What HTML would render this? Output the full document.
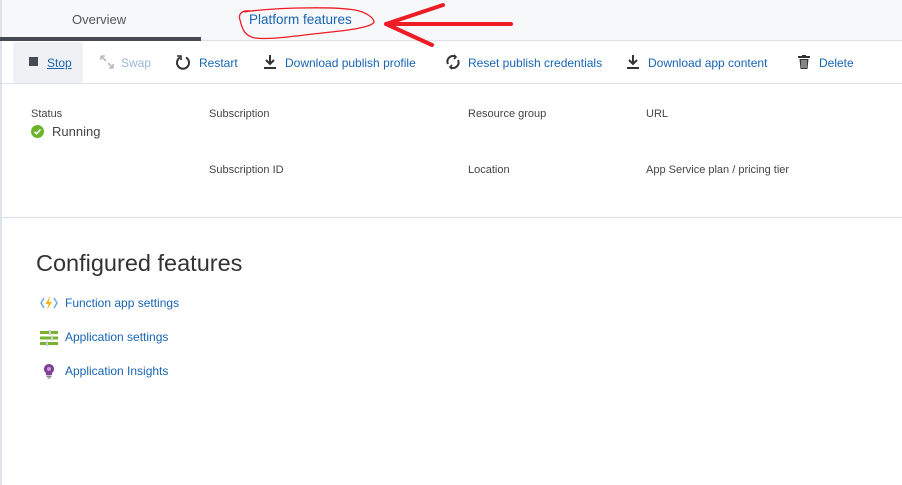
<!DOCTYPE html>
<html><head><meta charset="utf-8"><style>
*{margin:0;padding:0;box-sizing:border-box}
body{width:902px;height:485px;background:#fff;font-family:"Liberation Sans",sans-serif;position:relative;overflow:hidden;color:#333}
.a{position:absolute;white-space:nowrap}
.lnk{color:#1764b3;font-size:12px}
.lbl{font-size:11px;color:#444}
</style></head><body>
<div class="a" style="left:0;top:0;width:902px;height:41px;background:#f7f8fa;border-bottom:1px solid #dde1e6"></div>
<div class="a" style="left:0;top:0;width:2px;height:485px;background:#dde3ea"></div>
<div class="a" style="left:72px;top:12px;font-size:13px;color:#555">Overview</div>
<div class="a" style="left:0;top:37px;width:201px;height:4px;background:#454b54"></div>
<div class="a" style="left:249px;top:12px;font-size:13.5px;color:#1764b3">Platform features</div>

<div class="a" style="left:0;top:83px;width:902px;height:1px;background:#dde1e6"></div>
<div class="a" style="left:13px;top:42px;width:70px;height:41px;background:#f0f1f5"></div>
<div class="a" style="left:29px;top:57px;width:9px;height:9px;background:#454b54"></div>
<div class="a lnk" style="left:47px;top:56px;text-decoration:underline">Stop</div>
<svg class="a" style="left:99px;top:54px" width="16" height="16" viewBox="0 0 16 16" fill="none" stroke="#b8bcc2" stroke-width="1.6"><path d="M2 2l5 5M2 2v4M2 2h4M14 14l-5-5M14 14v-4M14 14h-4"/></svg>
<div class="a" style="left:121px;top:56px;font-size:12px;color:#9bb7d6">Swap</div>
<svg class="a" style="left:175px;top:54px" width="16" height="16" viewBox="0 0 16 16" fill="none" stroke="#333" stroke-width="2"><path d="M5 3.5A6 6 0 1 0 11 3.5"/><path d="M2 2h4v4" stroke-width="1.6"/></svg>
<div class="a lnk" style="left:199px;top:56px">Restart</div>
<svg class="a" style="left:263px;top:54px" width="14" height="16" viewBox="0 0 14 16"><path d="M7 1v9M3 6l4 4 4-4" stroke="#333" stroke-width="2" fill="none"/><rect x="1" y="13" width="12" height="2" fill="#333"/></svg>
<div class="a lnk" style="left:285px;top:56px">Download publish profile</div>
<svg class="a" style="left:445px;top:54px" width="16" height="16" viewBox="0 0 16 16" fill="none" stroke="#333" stroke-width="2"><path d="M3 10A5.5 5.5 0 0 1 10 2.5M13 6A5.5 5.5 0 0 1 6 13.5"/><path d="M9 1l2 2-2 2M7 11l-2 2 2 2" stroke-width="1.6"/></svg>
<div class="a lnk" style="left:468px;top:56px">Reset publish credentials</div>
<svg class="a" style="left:626px;top:54px" width="14" height="16" viewBox="0 0 14 16"><path d="M7 1v9M3 6l4 4 4-4" stroke="#333" stroke-width="2" fill="none"/><rect x="1" y="13" width="12" height="2" fill="#333"/></svg>
<div class="a lnk" style="left:648px;top:56px">Download app content</div>
<svg class="a" style="left:798px;top:55px" width="12" height="14" viewBox="0 0 12 14"><rect x="0" y="1" width="12" height="2" fill="#333"/><rect x="4" y="0" width="4" height="2" fill="#333"/><path d="M1.5 4h9l-1 10h-7z" fill="#333"/><path d="M4 5v8M6 5v8M8 5v8" stroke="#fff" stroke-width=".8"/></svg>
<div class="a lnk" style="left:819px;top:56px">Delete</div>

<div class="a lbl" style="left:31px;top:108px">Status</div>
<div class="a" style="left:31px;top:125px;width:13px;height:13px;border-radius:50%;background:#6db32a"></div>
<svg class="a" style="left:31px;top:125px" width="13" height="13" viewBox="0 0 13 13"><path d="M3.5 6.8l2 2 4-4.3" stroke="#fff" stroke-width="1.6" fill="none"/></svg>
<div class="a" style="left:52px;top:124px;font-size:13px;color:#444">Running</div>
<div class="a lbl" style="left:209px;top:108px">Subscription</div>
<div class="a lbl" style="left:468px;top:108px">Resource group</div>
<div class="a lbl" style="left:646px;top:108px">URL</div>
<div class="a lbl" style="left:209px;top:164px">Subscription ID</div>
<div class="a lbl" style="left:468px;top:164px">Location</div>
<div class="a lbl" style="left:646px;top:164px">App Service plan / pricing tier</div>
<div class="a" style="left:0;top:217px;width:902px;height:1px;background:#dde1e6"></div>

<div class="a" style="left:36px;top:250px;font-size:23.5px;color:#333">Configured features</div>
<svg class="a" style="left:40px;top:295px" width="18" height="16" viewBox="0 0 18 16"><path d="M4 3L1 8l3 5M14 3l3 5-3 5" stroke="#6aa8d8" stroke-width="1.4" fill="none"/><path d="M10 1L5.5 9h3L7 15l5-8H9z" fill="#f6b91d"/></svg>
<div class="a lnk" style="left:65px;top:296px">Function app settings</div>
<svg class="a" style="left:40px;top:330px" width="18" height="16" viewBox="0 0 18 16"><rect x="0" y="1" width="18" height="3" fill="#7ab32e"/><rect x="0" y="6.5" width="18" height="3" fill="#7ab32e"/><rect x="0" y="12" width="18" height="3" fill="#7ab32e"/><rect x="9" y="0" width="2" height="5" fill="#c9d1d6"/><rect x="11" y="5.5" width="2" height="5" fill="#c9d1d6"/><rect x="6" y="11" width="2" height="5" fill="#c9d1d6"/></svg>
<div class="a lnk" style="left:65px;top:330px">Application settings</div>
<svg class="a" style="left:43px;top:363px" width="12" height="16" viewBox="0 0 12 16"><path d="M6 1a5 5 0 0 0-3 9v2h6v-2a5 5 0 0 0-3-9z" fill="#7f3f98"/><circle cx="6" cy="6" r="2" fill="#c99ad6"/><rect x="3.5" y="12.5" width="5" height="1.5" fill="#888"/><rect x="4.5" y="14.3" width="3" height="1.3" fill="#888"/></svg>
<div class="a lnk" style="left:65px;top:364px">Application Insights</div>

<svg class="a" style="left:0;top:0" width="902" height="60" viewBox="0 0 902 60" fill="none" stroke="#ee1c25">
<path d="M244 12C270 8 330 6 355 10C366 12 374 18 374 22C372 27 352 30 322 33C295 36 270 40 255 38C244 36 242 28 240 20C238 14 242 10 250 11" stroke-width="1.3"/>
<path d="M511 24H386M386 24L443 5M386 24L432 45" stroke-width="4" stroke-linecap="round"/>
</svg>
</body></html>
